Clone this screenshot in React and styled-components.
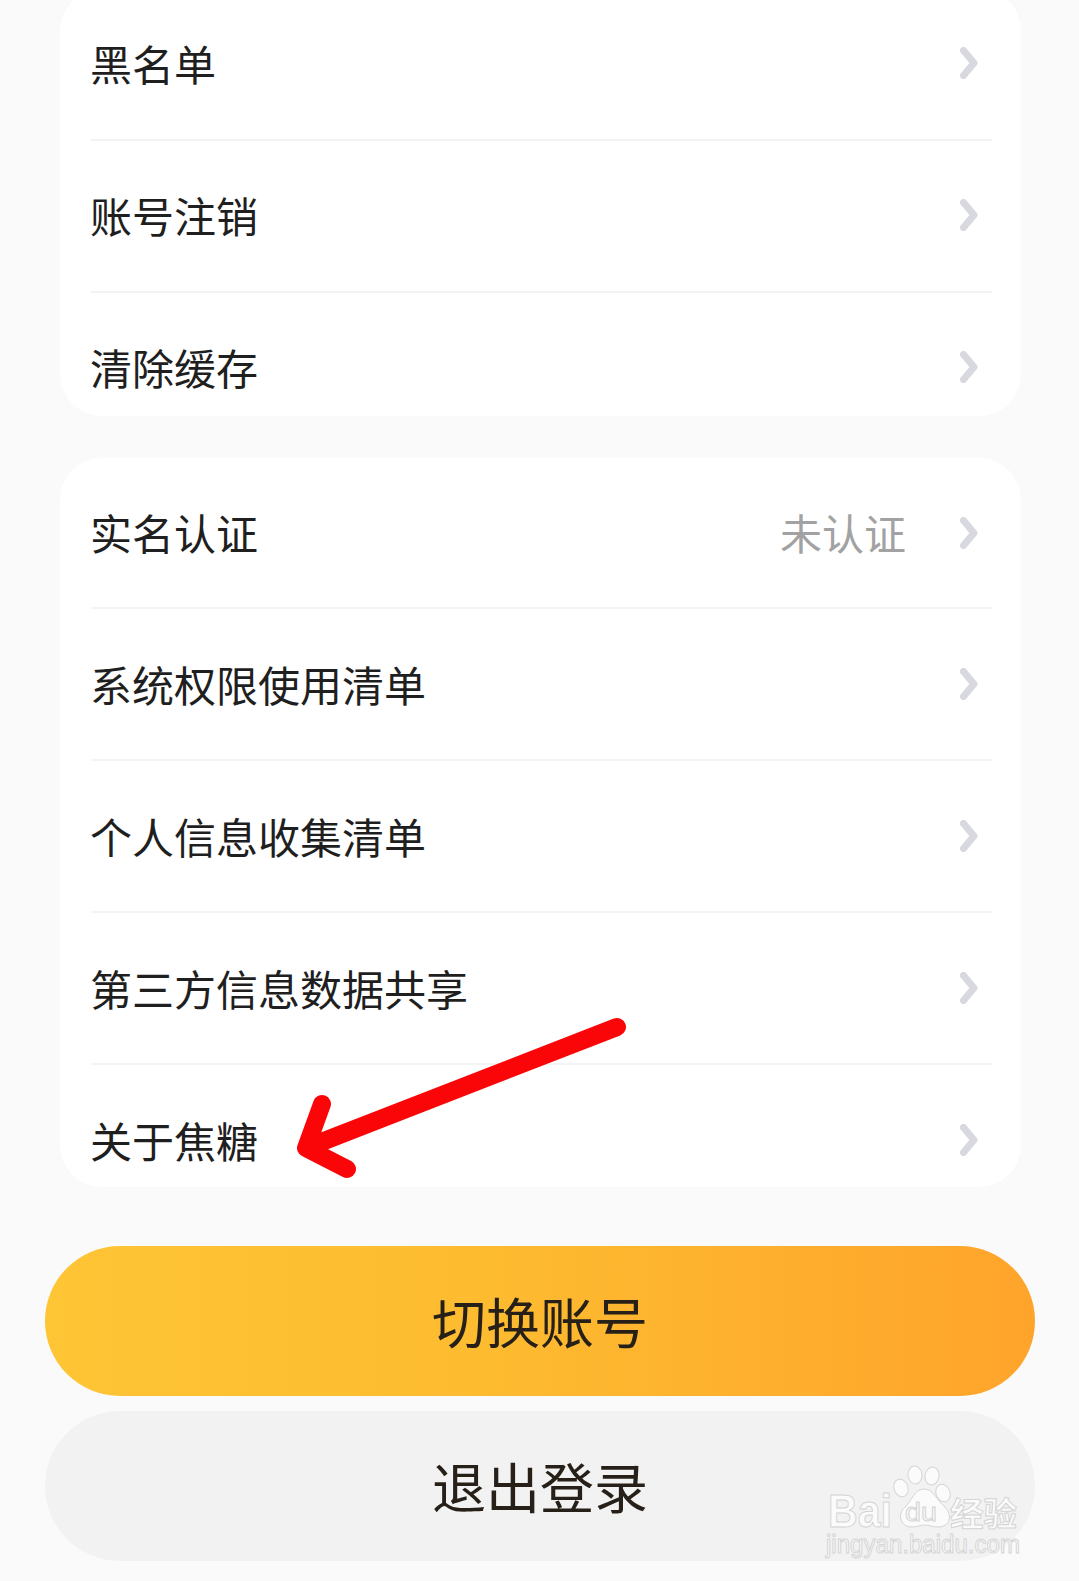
import React from 'react';
import styled, { createGlobalStyle } from 'styled-components';

const GlobalStyle = createGlobalStyle`
  html, body {
    margin: 0;
    padding: 0;
    background: #fafafa;
  }
  body {
    font-family: "Noto Sans CJK SC", "Liberation Sans", sans-serif;
  }
`;

const Page = styled.div`
  position: relative;
  width: 1079px;
  height: 1581px;
  overflow: hidden;
  background: #fafafa;
  display: flex;
  flex-direction: column;
`;

const Cards = styled.div`
  display: flex;
  flex-direction: column;
  gap: 42px;
  margin: -11px 58px 0 60px;
`;

const Card = styled.div`
  height: ${(p) => p.$height}px;
  background: #fff;
  border-radius: 42px;
  overflow: hidden;
  padding: 0 29px 0 31px;
`;

const Row = styled.div`
  height: ${(p) => p.$height - p.$lift}px;
  padding-bottom: ${(p) => p.$lift}px;
  display: flex;
  align-items: center;
  border-bottom: 2px solid #f3f3f3;
  &:last-child {
    border-bottom: none;
  }
`;

const Label = styled.span`
  flex: 1;
  font-size: 42px;
  line-height: 48px;
  font-weight: 400;
  color: #1f1f1f;
  margin-left: -1px;
  padding-bottom: 1px;
`;

const Value = styled.span`
  font-size: 42px;
  line-height: 48px;
  color: #a2a2a2;
  margin-right: 54px;
  padding-bottom: 1px;
`;

const ChevronIcon = styled.svg`
  width: 18px;
  height: 32px;
  margin-right: 14px;
  flex: none;
`;

const Buttons = styled.div`
  display: flex;
  flex-direction: column;
  gap: 15px;
  margin: 59px 44px 0 45px;
`;

const Button = styled.div`
  height: 150px;
  border-radius: 75px;
  display: flex;
  align-items: center;
  justify-content: center;
  font-size: 54px;
  padding-bottom: 2px;
  box-sizing: border-box;
  color: #262019;
  background: ${(p) =>
    p.$primary ? 'linear-gradient(90deg, #fec535 0%, #fdbb30 45%, #ffa42b 100%)' : '#f2f2f2'};
`;

const ArrowMark = styled.svg`
  position: absolute;
  left: 290px;
  top: 1010px;
  width: 350px;
  height: 180px;
`;

const Watermark = styled.svg`
  position: absolute;
  left: 820px;
  top: 1460px;
  width: 210px;
  height: 105px;
`;

const Chevron = () => (
  <ChevronIcon viewBox="0 0 18 32">
    <path d="M3.5 3.5 L14 16 L3.5 28.5" fill="none" stroke="#d8d8df" strokeWidth="7" strokeLinecap="round" strokeLinejoin="round" />
  </ChevronIcon>
);

const firstGroup = [
  { label: '黑名单', height: 150 },
  { label: '账号注销', height: 150 },
  { label: '清除缓存', height: 150 },
];

const secondGroup = [
  { label: '实名认证', value: '未认证', height: 149 },
  { label: '系统权限使用清单', height: 150 },
  { label: '个人信息收集清单', height: 150 },
  { label: '第三方信息数据共享', height: 150 },
  { label: '关于焦糖', height: 150 },
];

const MenuCard = ({ items, height, lift = 0 }) => (
  <Card $height={height}>
    {items.map((item) => (
      <Row key={item.label} $height={item.height} $lift={lift}>
        <Label>{item.label}</Label>
        {item.value && <Value>{item.value}</Value>}
        <Chevron />
      </Row>
    ))}
  </Card>
);

const wmText = {
  fill: '#fbfbfb',
  stroke: '#d4d4d4',
  strokeWidth: 1,
};

export default function App() {
  return (
    <Page>
      <GlobalStyle />
      <Cards>
        <MenuCard items={firstGroup} height={427} lift={2} />
        <MenuCard items={secondGroup} height={729} />
      </Cards>
      <Buttons>
        <Button $primary>切换账号</Button>
        <Button>退出登录</Button>
      </Buttons>
      <ArrowMark viewBox="0 0 350 180">
        <path
          d="M327 17 L16 138 M32 94 L16 138 L57 159"
          fill="none"
          stroke="#fb0608"
          strokeWidth="18"
          strokeLinecap="round"
          strokeLinejoin="round"
        />
      </ArrowMark>
      <Watermark viewBox="0 0 210 105">
        <g {...wmText}>
          <ellipse cx="81" cy="28" rx="7" ry="9" transform="rotate(-20 81 28)" />
          <ellipse cx="95" cy="15" rx="7" ry="9" transform="rotate(-8 95 15)" />
          <ellipse cx="112" cy="16" rx="7" ry="9" transform="rotate(10 112 16)" />
          <ellipse cx="123" cy="33" rx="7" ry="9" transform="rotate(-20 123 33)" />
          <path d="M104 29 C94 29 92 41 85 47 C77 54 80 67 92 67 C98 67 100 65 105 65 C110 65 112 67 118 67 C130 67 133 55 125 47 C117 41 114 29 104 29 Z" />
          <text x="8" y="67" fontFamily="Liberation Sans, sans-serif" fontWeight="700" fontSize="46" textLength="64" lengthAdjust="spacingAndGlyphs">Bai</text>
          <text x="130" y="66" fontFamily="Noto Sans CJK SC, sans-serif" fontWeight="700" fontSize="33" textLength="67" lengthAdjust="spacingAndGlyphs">经验</text>
          <text x="6" y="93" fontFamily="Liberation Sans, sans-serif" fontSize="25" textLength="194" lengthAdjust="spacingAndGlyphs">jingyan.baidu.com</text>
          <text x="85" y="61" fontFamily="Liberation Sans, sans-serif" fontSize="26" textLength="32" lengthAdjust="spacingAndGlyphs">du</text>
        </g>
      </Watermark>
    </Page>
  );
}
